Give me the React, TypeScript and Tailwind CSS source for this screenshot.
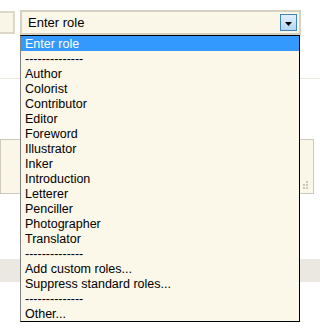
const roles = [
  "Enter role",
  "--------------",
  "Author",
  "Colorist",
  "Contributor",
  "Editor",
  "Foreword",
  "Illustrator",
  "Inker",
  "Introduction",
  "Letterer",
  "Penciller",
  "Photographer",
  "Translator",
  "--------------",
  "Add custom roles...",
  "Suppress standard roles...",
  "--------------",
  "Other...",
]

export default function App() {
  return (
    <div className="relative w-[320px] h-[331px] overflow-hidden bg-white font-['Liberation_Sans',Arial,sans-serif] text-[12.5px] text-black">

      {/* Form behind the open list */}
      <div className="flex items-start gap-[5px] pt-[10px]">
        <div className="mt-[1px] h-[23px] w-[15px] border-2 border-l-0 border-[#dcd8ca] bg-[#faf6e7]" />

        <div className="flex h-[25px] w-[281px] items-center justify-between border-2 border-[#d5d1c2] bg-[#faf7e9] pl-[6px] pr-[2px]">
          <span className="text-[13px]">Enter role</span>
          <div className="flex h-[17px] w-[17px] items-center justify-center border border-[#3f84b8] bg-gradient-to-b from-[#e3f0fd] to-[#b5d6f4]">
            <svg width="7" height="4" viewBox="0 0 7 4" className="mt-[2px]">
              <polygon points="0,0 7,0 3.5,4" fill="#000" />
            </svg>
          </div>
        </div>
      </div>

      <div className="mt-[43px] h-px bg-[#ebe7dd]" />

      <div className="relative mt-[60px] h-[55px] w-[314px] border border-[#cdcac0] bg-[#faf6e8]">
        {/* resize grip */}
        <svg width="8" height="9" viewBox="0 0 8 9" className="absolute right-[4px] bottom-[3px]">
          <rect x="5" y="0" width="2" height="2" fill="#c9c6bc" />
          <rect x="2" y="3" width="2" height="2" fill="#c9c6bc" />
          <rect x="5" y="3" width="2" height="2" fill="#c9c6bc" />
          <rect x="2" y="6" width="2" height="2" fill="#c9c6bc" />
          <rect x="5" y="6" width="2" height="2" fill="#c9c6bc" />
        </svg>
      </div>

      <div className="mt-[65px] h-[23px] bg-[#ebe8e2]" />

      {/* Open dropdown list */}
      <ul className="absolute left-[20px] top-[35px] w-[280px] border border-black border-l-[#7f7f7f] bg-[#fbf7e9]">
        {roles.map((role, i) => (
          <li
            key={i}
            className={
              i === 0
                ? "h-[15px] bg-[#3399ff] pl-[4px] pt-px leading-[14px] text-white"
                : "h-[15px] pl-[4px] pt-px leading-[14px]"
            }
          >
            {role}
          </li>
        ))}
      </ul>
    </div>
  )
}
